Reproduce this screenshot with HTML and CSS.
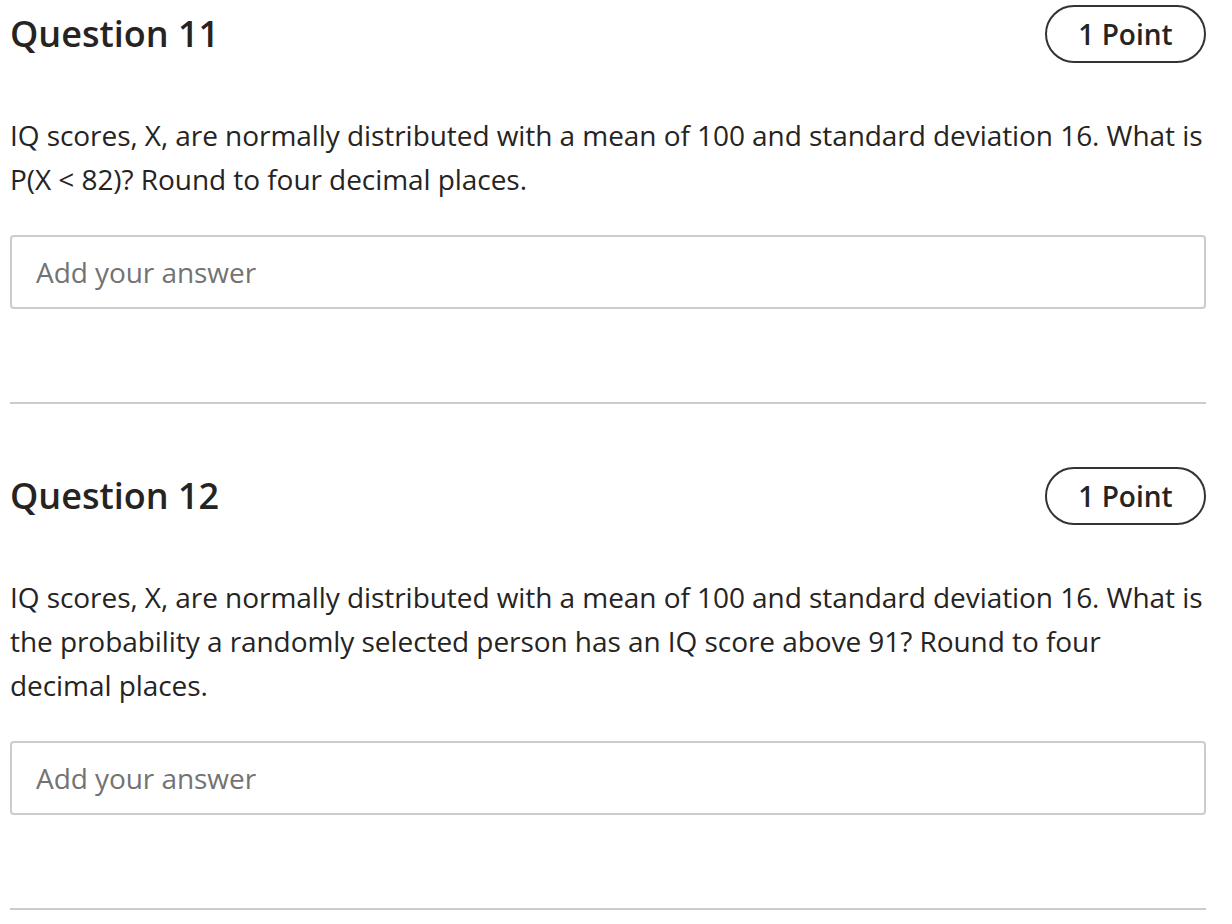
FILE: index.html
```html
<!DOCTYPE html>
<html lang="en">
<head>
<meta charset="utf-8">
<title>Quiz</title>
<link rel="stylesheet" href="styles.css">
</head>
<body>
<main class="page">
  <section class="question">
    <div class="q-head">
      <h2 class="q-title">Question 11</h2>
      <span class="q-points">1 Point</span>
    </div>
    <p class="q-text">IQ scores, X, are normally distributed with a mean of 100 and standard deviation 16. What is P(X &lt; 82)? Round to four decimal places.</p>
    <input class="q-answer" type="text" placeholder="Add your answer">
  </section>
  <section class="question">
    <div class="q-head">
      <h2 class="q-title">Question 12</h2>
      <span class="q-points">1 Point</span>
    </div>
    <p class="q-text">IQ scores, X, are normally distributed with a mean of 100 and standard deviation 16. What is the probability a randomly selected person has an IQ score above 91? Round to four decimal places.</p>
    <input class="q-answer" type="text" placeholder="Add your answer">
  </section>
</main>
</body>
</html>
```
FILE: styles.css
```css
* { box-sizing: border-box; }
html, body {
  margin: 0;
  padding: 0;
  background: #ffffff;
}
body {
  font-family: "Open Sans", "Noto Sans", sans-serif;
  color: #252423;
}
.page {
  width: 1196px;
  margin-left: 10px;
  padding-top: 5px;
  display: flex;
  flex-direction: column;
}
.question {
  display: flex;
  flex-direction: column;
  border-bottom: 2px solid #cccccc;
  padding-bottom: 93px;
  margin-bottom: 63px;
}
.q-head {
  display: flex;
  align-items: center;
  justify-content: space-between;
  height: 58px;
}
.q-title {
  margin: 0;
  font-size: 36px;
  font-weight: 600;
  line-height: 1;
  color: #252423;
}
.q-points {
  display: flex;
  align-items: center;
  justify-content: center;
  height: 58px;
  width: 161px;
  border: 2px solid #333333;
  border-radius: 29px;
  font-size: 28px;
  font-weight: 600;
  color: #252423;
}
.q-text {
  margin: 50px 0 34px;
  font-size: 28px;
  line-height: 44px;
  letter-spacing: -0.06px;
  color: #252423;
}
.q-answer {
  display: block;
  width: 100%;
  height: 74px;
  border: 2px solid #cccccc;
  border-radius: 4px;
  padding: 0 24px;
  font-family: "Open Sans", "Noto Sans", sans-serif;
  font-size: 28px;
  letter-spacing: -0.06px;
  color: #252423;
  background: #fff;
  outline: none;
}
.q-answer::placeholder {
  color: #737373;
  opacity: 1;
}
```
